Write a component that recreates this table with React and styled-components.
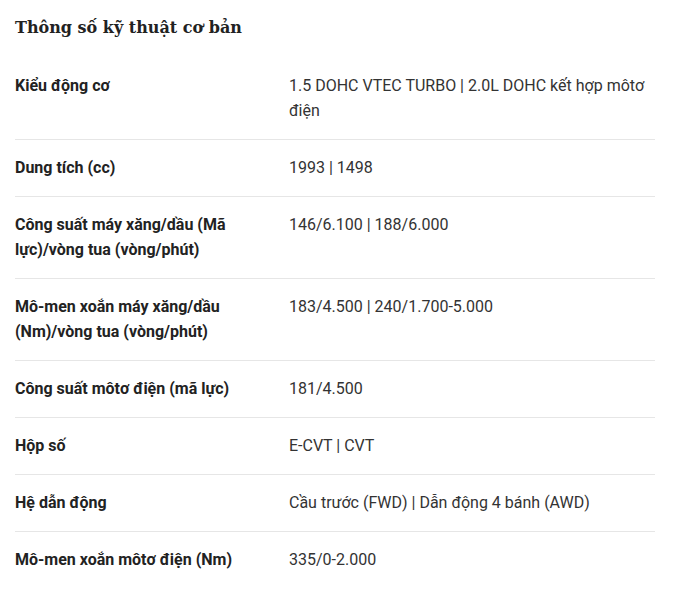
import React from 'react'
import styled, { createGlobalStyle } from 'styled-components'

const GlobalStyle = createGlobalStyle`
  body {
    margin: 0;
    background: #fff;
  }
`

const specs = [
  ['Kiểu động cơ', '1.5 DOHC VTEC TURBO | 2.0L DOHC kết hợp môtơ điện'],
  ['Dung tích (cc)', '1993 | 1498'],
  ['Công suất máy xăng/dầu (Mã lực)/vòng tua (vòng/phút)', '146/6.100 | 188/6.000'],
  ['Mô-men xoắn máy xăng/dầu (Nm)/vòng tua (vòng/phút)', '183/4.500 | 240/1.700-5.000'],
  ['Công suất môtơ điện (mã lực)', '181/4.500'],
  ['Hộp số', 'E-CVT | CVT'],
  ['Hệ dẫn động', 'Cầu trước (FWD) | Dẫn động 4 bánh (AWD)'],
  ['Mô-men xoắn môtơ điện (Nm)', '335/0-2.000'],
]

export default function App() {
  return (
    <Wrapper>
      <GlobalStyle />
      <Title>Thông số kỹ thuật cơ bản</Title>
      <Table>
        <tbody>
          {specs.map(([label, value], index) => (
            <Row key={index} last={index === specs.length - 1}>
              <Label>{label}</Label>
              <Value>{value}</Value>
            </Row>
          ))}
        </tbody>
      </Table>
    </Wrapper>
  )
}

const Wrapper = styled.div`
  padding: 15px 18px 0 15px;
  font-family: Roboto, 'Liberation Sans', sans-serif;
`

const Title = styled.h2`
  margin: 0 0 17px;
  font-family: 'DejaVu Serif', 'Liberation Serif', serif;
  font-size: 16px;
  font-weight: 700;
  line-height: 26px;
  color: #222;
`

const Table = styled.table`
  width: 640px;
  table-layout: fixed;
  border-collapse: collapse;
`

const Row = styled.tr`
  border-bottom: ${(p) => (p.last ? 'none' : '1px solid #e6e6e6')};
`

const Label = styled.td`
  width: 250px;
  padding: 15px 24px 16px 0;
  vertical-align: top;
  font-size: 16px;
  font-weight: 700;
  line-height: 25px;
  color: #222;
`

const Value = styled.td`
  padding: 15px 0 16px;
  vertical-align: top;
  font-size: 16px;
  line-height: 25px;
  color: #333;
`
